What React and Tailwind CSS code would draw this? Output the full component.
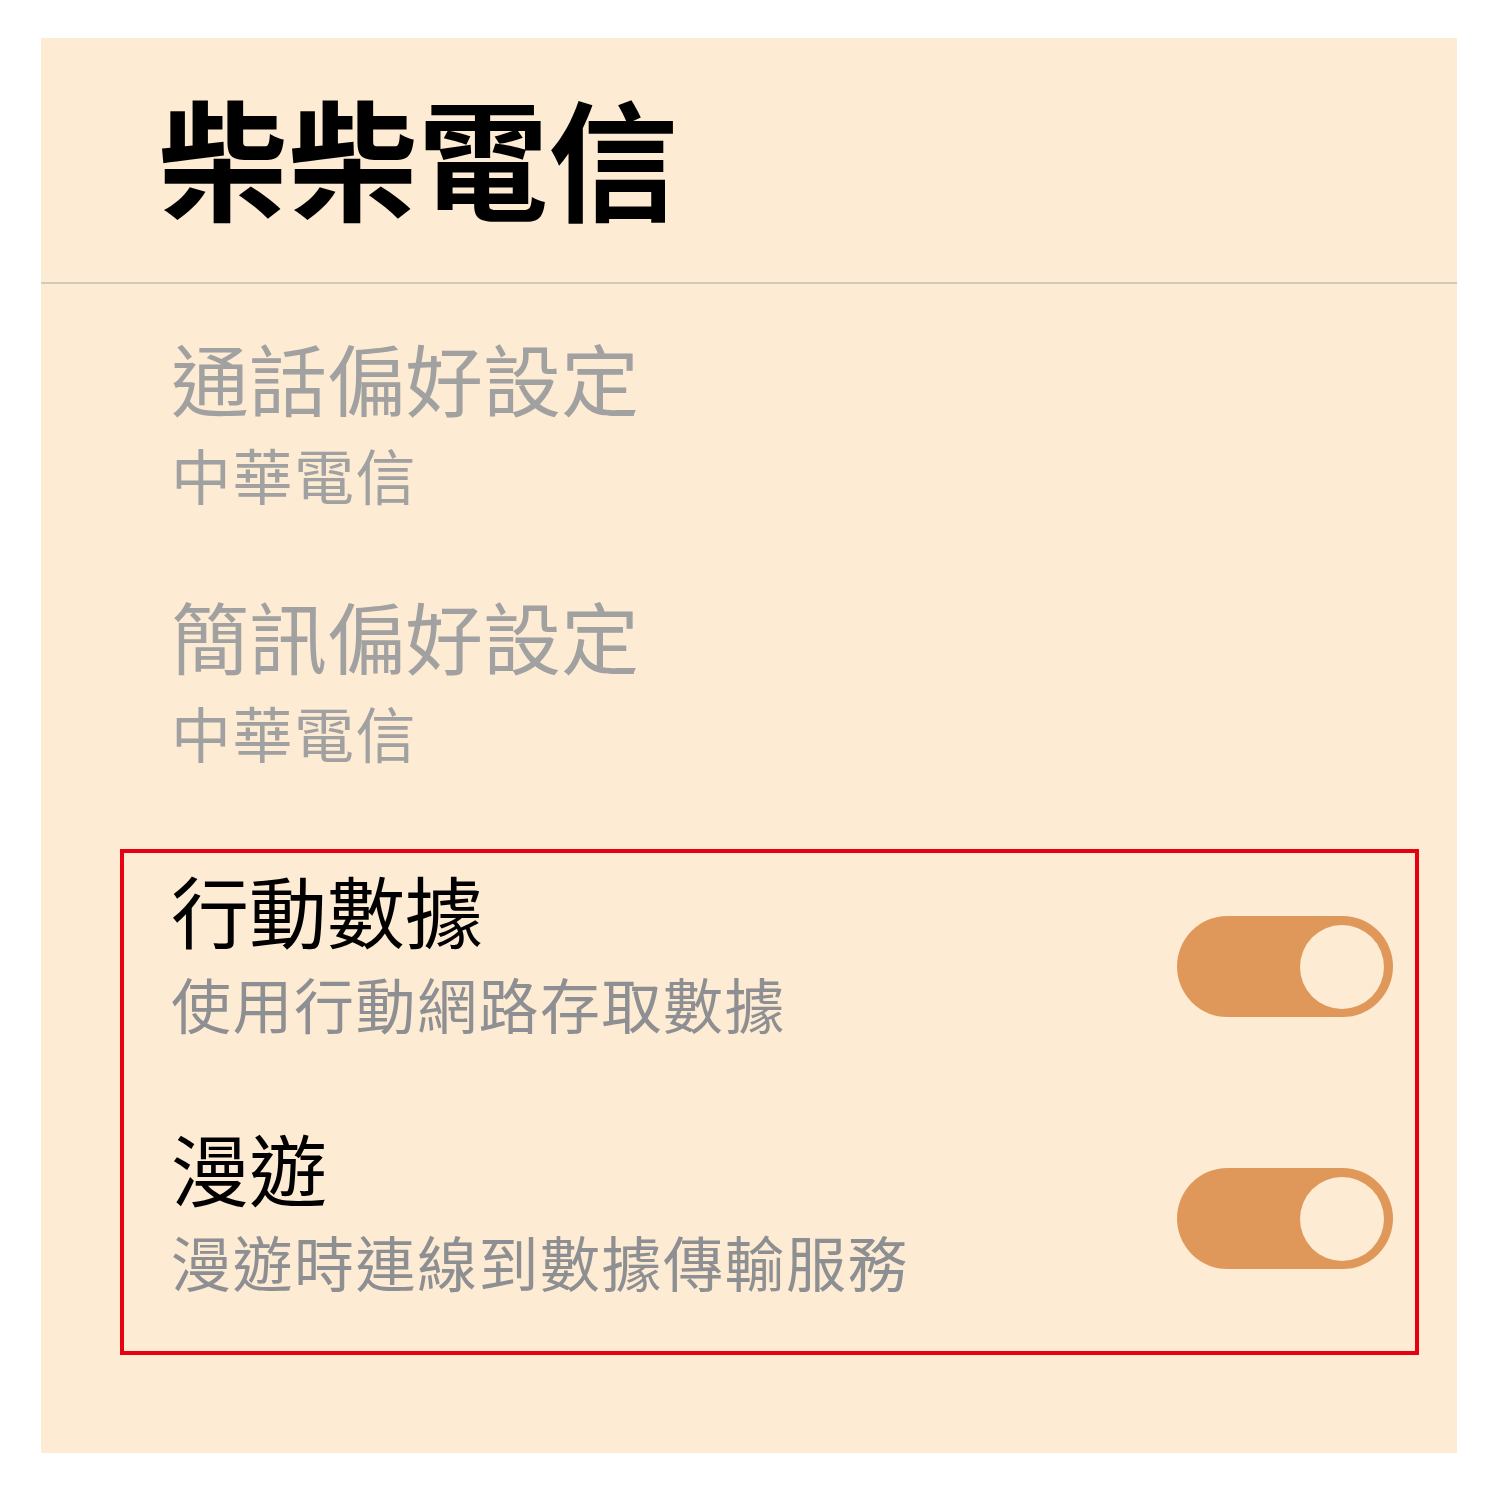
import React from 'react';

const font = { fontFamily: '"Noto Sans CJK TC", "Noto Sans", sans-serif' };

function Toggle({ className = '' }) {
  return (
    <div className={`flex h-[101px] w-[216px] shrink-0 items-center justify-end rounded-full bg-[#df9859] pr-[9px] ${className}`}>
      <div className="h-[84px] w-[84px] rounded-full bg-[#fdebd3]" />
    </div>
  );
}

function Pref({ title, sub, disabled, tight }) {
  return (
    <div className="flex flex-col">
      <div className={`text-[78px] leading-none ${disabled ? 'text-[#a0a1a0]' : 'text-black'}`}>{title}</div>
      <div
        className={`${tight ? 'mt-[25px]' : 'mt-[28px]'} text-[60px] leading-none tracking-[1.5px] ${
          disabled ? 'text-[#a0a1a0]' : 'text-[#8e8f92]'
        }`}
      >
        {sub}
      </div>
    </div>
  );
}

export default function App() {
  return (
    <div className="min-h-[1500px] bg-white pt-[38px] pl-[41px]" style={font}>
      <div className="flex h-[1415px] w-[1416px] flex-col bg-[#fdebd3]">
        {/* Header */}
        <div className="pt-[51px] pl-[117px] pb-[63px]">
          <h1 className="text-[130px] font-bold leading-none text-black">柴柴電信</h1>
        </div>
        <div className="h-[2px] bg-[#d1cbb9]" />

        {/* Carrier preferences */}
        <div className="flex flex-col gap-[92px] pt-[54px] pl-[130px]">
          <Pref title="通話偏好設定" sub="中華電信" disabled />
          <Pref title="簡訊偏好設定" sub="中華電信" disabled />
        </div>

        {/* Highlighted data section */}
        <div className="mt-[87px] ml-[79px] mr-[38px] flex flex-col gap-[95px] border-4 border-[#e60012] pt-[17px] pb-[60px] pl-[47px] pr-[22px]">
          <div className="flex items-center justify-between">
            <Pref title="行動數據" sub="使用行動網路存取數據" tight />
            <Toggle className="mt-[30px]" />
          </div>
          <div className="flex items-center justify-between">
            <Pref title="漫遊" sub="漫遊時連線到數據傳輸服務" tight />
            <Toggle className="mt-[18px]" />
          </div>
        </div>
      </div>
    </div>
  );
}
